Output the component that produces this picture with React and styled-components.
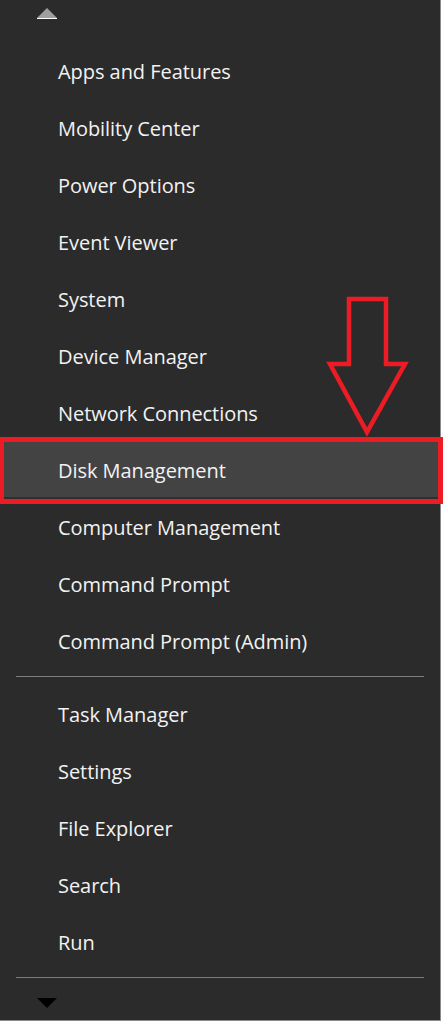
import React from "react";
import styled, { createGlobalStyle } from "styled-components";

const Global = createGlobalStyle`
  html, body { margin: 0; padding: 0; background: #ffffff; }
  #root { width: 445px; height: 1021px; }
`;

const Panel = styled.div`
  position: relative;
  box-sizing: border-box;
  width: 441px;
  height: 1021px;
  background: #2b2b2b;
  border-right: 1px solid #8a8a8a;
  border-bottom: 1px solid #8a8a8a;
  display: flex;
  flex-direction: column;
  font-family: "Open Sans", "Noto Sans", sans-serif;
`;

const TopBar = styled.div`
  height: 43px;
  box-sizing: border-box;
  padding: 8px 0 0 37px;
`;

const UpTriangle = styled.div`
  width: 0;
  height: 0;
  border-left: 10px solid transparent;
  border-right: 10px solid transparent;
  border-bottom: 10px solid #9f9f9f;
`;

const UpBase = styled.div`
  width: 20px;
  height: 1px;
  background: #ffffff;
`;

const Group = styled.div`
  display: flex;
  flex-direction: column;
`;

const Row = styled.div`
  position: relative;
  height: 57px;
  display: flex;
  align-items: center;
  padding-left: 58px;
  box-sizing: border-box;
  color: #f2f2f2;
  font-size: 20px;
  letter-spacing: -0.05px;
  background: ${(p) => (p.$active ? "#434343" : "transparent")};
  ${(p) =>
    p.$active &&
    `
    box-shadow: inset 0 -2px 0 #2f2f2f;
    &::after {
      content: "";
      position: absolute;
      left: -1px;
      top: -5px;
      width: 444px;
      height: 67px;
      box-sizing: border-box;
      border: 5px solid #ed1c24;
      pointer-events: none;
    }
  `}
`;

const Separator = styled.div`
  height: 1px;
  margin: ${(p) => p.$margin};
  width: 408px;
  background: #7c7c7c;
`;

const BottomBar = styled.div`
  padding: 20px 0 0 37px;
`;

const DownTriangle = styled.div`
  width: 0;
  height: 0;
  border-left: 10px solid transparent;
  border-right: 10px solid transparent;
  border-top: 10px solid #000000;
`;

const ArrowOverlay = styled.svg`
  position: absolute;
  left: 325px;
  top: 294px;
  width: 86px;
  height: 146px;
  overflow: visible;
`;

const first = [
  "Apps and Features",
  "Mobility Center",
  "Power Options",
  "Event Viewer",
  "System",
  "Device Manager",
  "Network Connections",
  "Disk Management",
  "Computer Management",
  "Command Prompt",
  "Command Prompt (Admin)",
];

const second = ["Task Manager", "Settings", "File Explorer", "Search", "Run"];

export default function App() {
  return (
    <>
      <Global />
      <Panel>
        <TopBar>
          <UpTriangle />
          <UpBase />
        </TopBar>
        <Group>
          {first.map((t) => (
            <Row key={t} $active={t === "Disk Management"}>
              {t}
            </Row>
          ))}
        </Group>
        <Separator $margin="6px 0 9px 16px" />
        <Group>
          {second.map((t) => (
            <Row key={t}>{t}</Row>
          ))}
        </Group>
        <Separator $margin="6px 0 0 16px" />
        <BottomBar>
          <DownTriangle />
        </BottomBar>
        <ArrowOverlay viewBox="0 0 86 146">
          <path
            d="M24 5 L61 5 L61 70 L80 70 L42 138 L5 70 L24 70 Z"
            fill="none"
            stroke="#ed1c24"
            strokeWidth="4.5"
            strokeLinejoin="miter"
          />
        </ArrowOverlay>
      </Panel>
    </>
  );
}
